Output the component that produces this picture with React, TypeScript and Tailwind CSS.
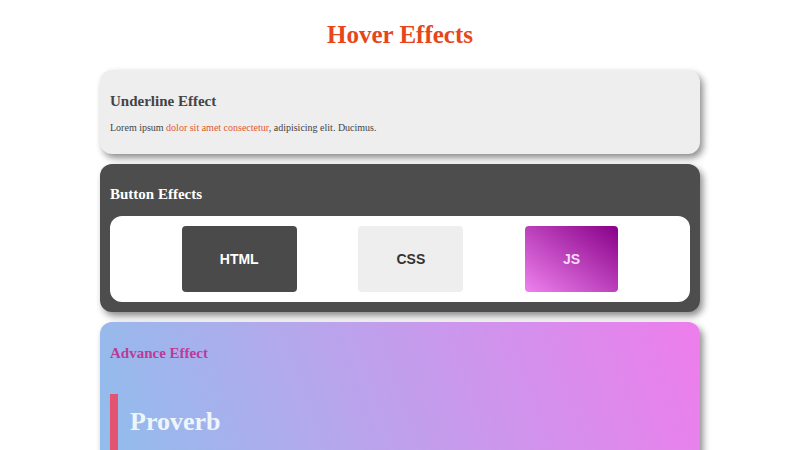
const serif = "font-['Liberation_Serif',serif]";

function Card({ className, children }: { className: string; children: React.ReactNode }) {
  return (
    <section className={`rounded-xl p-[10px] shadow-[3px_4px_7px_rgba(0,0,0,0.45)] ${className}`}>
      {children}
    </section>
  );
}

const BUTTONS = [
  { label: "HTML", cls: "bg-[#4a4a4a] text-white" },
  { label: "CSS", cls: "bg-[#eeeeee] text-[#333]" },
  {
    label: "JS",
    cls: "bg-[linear-gradient(to_top_right,#ee82ee,#880088)] text-[#f6dcf6]",
  },
];

export default function App() {
  return (
    <main className={`min-h-[450px] w-full overflow-hidden bg-white ${serif}`}>
      <h1 className="pt-[19px] text-center text-[25px] font-bold leading-8 text-[#e8461a]">
        Hover Effects
      </h1>

      <div className="mx-auto mt-[19px] flex w-[600px] flex-col gap-[10px]">
        <Card className="bg-[#eeeeee] pb-[19px]">
          <h2 className="mt-[11px] text-[15px] font-bold leading-5 text-[#444]">Underline Effect</h2>
          <p className="mt-[10px] text-[10px] leading-[14px] text-[#444]">
            Lorem ipsum <span className="text-[#e0592e]">dolor sit amet consectetur</span>, adipisicing elit. Ducimus.
          </p>
        </Card>

        <Card className="bg-[#4d4d4d]">
          <h2 className="mt-[10px] text-[15px] font-bold leading-5 text-white">Button Effects</h2>
          <div className="mt-[12px] flex justify-evenly rounded-xl bg-white p-[10px]">
            {BUTTONS.map((b) => (
              <button
                key={b.label}
                className={`rounded px-[38px] py-[25px] font-['Liberation_Sans',sans-serif] text-[14px] font-bold leading-4 ${b.cls}`}
              >
                {b.label}
              </button>
            ))}
          </div>
        </Card>

        <Card className="h-[300px] bg-[linear-gradient(70deg,#87c3ec,#b3a9ec_40%,#ee7dec)]">
          <h2 className="mt-[11px] text-[15px] font-bold leading-5 text-[#c0389a]">Advance Effect</h2>
          <blockquote className="mt-[31px] border-l-[8px] border-[#e2546f] pt-[12px] pb-[12px] pl-[12px]">
            <p className="text-[26px] font-bold leading-8 text-[#eef6fc]">Proverb</p>
          </blockquote>
        </Card>
      </div>
    </main>
  );
}
